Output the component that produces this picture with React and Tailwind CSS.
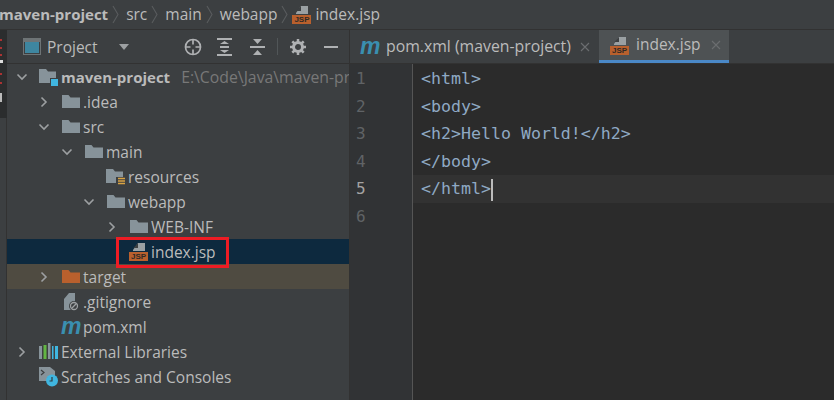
const ui = { fontFamily: '"Open Sans", "Noto Sans", sans-serif' };

function Chevron({ open }) {
  return (
    <svg width="16" height="16" viewBox="0 0 16 16" fill="none" stroke="#9da0a2" strokeWidth="1.6" className="shrink-0">
      {open ? <path d="M3.5 5.5 L8 10 L12.5 5.5" /> : <path d="M5.5 3.5 L10 8 L5.5 12.5" />}
    </svg>
  );
}

function Folder({ color = "#87939a" }) {
  return (
    <svg width="19" height="16" viewBox="0 0 19 16" className="shrink-0">
      <path d="M1 1 H7.5 L9.5 3.5 H19 V14 H1 Z" fill={color} />
    </svg>
  );
}

function ModuleFolder() {
  return (
    <svg width="19" height="18" viewBox="0 0 19 18" className="shrink-0">
      <path d="M0 1 H7 L9 3.5 H17 V15 H0 Z" fill="#87939a" />
      <rect x="11" y="10" width="8" height="8" fill="#3c3f41" />
      <rect x="12" y="11" width="7" height="7" fill="#40b6e0" />
    </svg>
  );
}

function ResFolder() {
  return (
    <svg width="19" height="18" viewBox="0 0 19 18" className="shrink-0">
      <path d="M0 1 H7 L9 3.5 H17 V15 H0 Z" fill="#87939a" />
      <rect x="10" y="9" width="9" height="9" fill="#3c3f41" />
      <path d="M12 10.5 H19 M12 13 H19 M12 15.500 H19" stroke="#d9a343" strokeWidth="1.4" />
    </svg>
  );
}

function Jsp() {
  return (
    <span className="relative block w-[19px] h-[19px] shrink-0">
      <svg width="19" height="19" viewBox="0 0 19 19" className="absolute left-0 top-0">
        <path d="M4 8 L9 1 H16 V9 H4 Z" fill="#9aa0a3" />
        <path d="M9 1 V6 H4.500 Z" fill="#3c3f41" />
      </svg>
      <span className="absolute left-0 bottom-0 w-[19px] h-[9px] bg-[#b9602d] text-[#2f2a26] text-[8px] leading-[9px] font-bold text-center" style={{ fontFamily: '"Liberation Sans", sans-serif' }}>JSP</span>
    </span>
  );
}

function Maven() {
  return (
    <span className="block w-[19px] text-[#3a8fb0] text-[23px] font-bold italic leading-none" style={{ fontFamily: '"Liberation Sans", sans-serif' }}>m</span>
  );
}

function GitIgnore() {
  return (
    <svg width="19" height="20" viewBox="0 0 19 20" className="shrink-0">
      <path d="M3 7 L8 1 H14 V12 H3 Z M3 12 H10 V18 H3 Z" fill="#87939a" />
      <circle cx="13" cy="14" r="5" fill="#3c3f41" />
      <circle cx="13" cy="14" r="3.500" fill="none" stroke="#9da0a2" strokeWidth="1.3" />
      <path d="M10.800 16.200 L15.200 11.800" stroke="#9da0a2" strokeWidth="1.3" />
    </svg>
  );
}

function Libraries() {
  return (
    <svg width="19" height="17" viewBox="0 0 19 17" className="shrink-0">
      <rect x="0" y="3" width="3" height="13" fill="#87939a" />
      <rect x="4.500" y="2" width="3" height="14" fill="#62b543" />
      <rect x="9" y="0" width="2.500" height="16" fill="#87939a" />
      <rect x="13" y="3" width="1.500" height="13" fill="#40b6e0" />
      <rect x="16" y="3" width="3" height="13" fill="#40b6e0" />
    </svg>
  );
}

function Scratches() {
  return (
    <svg width="19" height="20" viewBox="0 0 19 20" className="shrink-0">
      <path d="M0 0 H11 L16 4 V10 H0 Z M0 10 H8 V14 H0 Z" fill="#87939a" />
      <path d="M2 3 L5 5.500 L2 8" fill="none" stroke="#3c3f41" strokeWidth="1.200" />
      <circle cx="13" cy="13.500" r="6" fill="#40b6e0" />
      <path d="M13 10 V14 H10.500" fill="none" stroke="#2f3b40" strokeWidth="1.200" />
    </svg>
  );
}

function Row({ pl, chevron, icon, selected, excluded, children }) {
  const bg = selected ? "bg-[#0d293e]" : excluded ? "bg-[#4f4b41]" : "";
  return (
    <div className={`flex items-center h-[25px] whitespace-nowrap ${pl} ${bg}`}>
      <span className="w-4 h-4 shrink-0">{chevron ? <Chevron open={chevron === "open"} /> : null}</span>
      <span className="ml-[9px] w-[19px] flex justify-center items-center shrink-0">{icon}</span>
      <span className="ml-[3px] pt-[2px]">{children}</span>
    </div>
  );
}

function Crumb() {
  return (
    <svg width="7" height="19" viewBox="0 0 7 19" fill="none" stroke="#595c5e" strokeWidth="1.100" className="shrink-0 mx-[4px]">
      <path d="M1 1 L6 9.500 L1 18" />
    </svg>
  );
}

function Close() {
  return (
    <svg width="10" height="10" viewBox="0 0 10 10" stroke="#6b6e70" strokeWidth="1.100" className="shrink-0">
      <path d="M1 1 L9 9 M9 1 L1 9" />
    </svg>
  );
}

const lines = ["<html>", "<body>", "<h2>Hello World!</h2>", "</body>", "</html>", ""];

export default function App() {
  return (
    <div className="w-[834px] h-[400px] overflow-hidden bg-[#3c3f41] text-[#bbbbbb] flex flex-col text-[15.500px]" style={ui}>
      {/* breadcrumb */}
      <div className="h-[30px] shrink-0 flex items-center border-b border-[#323232] whitespace-nowrap">
        <span className="font-bold -ml-px text-[15px]">maven-project</span>
        <Crumb />
        <span className="ml-[3px]">src</span>
        <Crumb />
        <span className="ml-[3px]">main</span>
        <Crumb />
        <span className="ml-[3px]">webapp</span>
        <Crumb />
        <Jsp />
        <span className="ml-[4px]">index.jsp</span>
      </div>

      <div className="flex flex-1 min-h-0">
        {/* left tool strip */}
        <div className="w-[7px] shrink-0 bg-[#2b2d2e] h-[88px] relative overflow-hidden">
          <span className="absolute left-0 top-[9px] w-[2px] h-[2px] bg-[#a33]" />
          <span className="absolute left-0 top-[17px] w-[2px] h-[2px] bg-[#a33]" />
          <span className="absolute left-0 top-[24px] w-[2px] h-[2px] bg-[#a33]" />
          <span className="absolute left-0 top-[30px] w-[3px] h-[3px] bg-[#ddd]" />
          <span className="absolute left-0 top-[43px] w-[2px] h-[2px] bg-[#a33]" />
          <span className="absolute left-0 top-[52px] w-[2px] h-[2px] bg-[#a33]" />
          <span className="absolute left-0 top-[63px] w-[2px] h-[9px] bg-[#bbb]" />
        </div>

        {/* project pane */}
        <div className="w-[343px] shrink-0 flex flex-col border-l border-[#323232] -ml-px overflow-hidden">
          <div className="h-[34px] shrink-0 flex items-center border-b border-[#323232]">
            <svg width="18" height="17" viewBox="0 0 18 17" className="ml-[16px] shrink-0">
              <rect x="0.500" y="0.500" width="17" height="16" fill="none" stroke="#6e7476" />
              <rect x="1" y="1" width="16" height="3" fill="#6e7476" />
              <rect x="2" y="4" width="14" height="11" fill="#3e86a0" />
            </svg>
            <span className="ml-[6px] w-[52px] shrink-0 pt-[2px]">Project</span>
            <svg width="10" height="6" viewBox="0 0 10 6" className="ml-[20px] shrink-0"><path d="M0 0 H10 L5 6 Z" fill="#9da0a2" /></svg>
            <svg width="18" height="18" viewBox="0 0 18 18" fill="none" stroke="#afb1b3" strokeWidth="1.700" className="ml-[55px] shrink-0">
              <circle cx="9" cy="9" r="7.500" />
              <path d="M9 1.500 V6.500 M9 11.500 V16.500 M1.500 9 H6.500 M11.500 9 H16.500" />
            </svg>
            <svg width="15" height="18" viewBox="0 0 15 18" className="ml-[15px] shrink-0" fill="#afb1b3">
              <rect x="0" y="0" width="15" height="2" />
              <rect x="0" y="16" width="15" height="2" />
              <rect x="3" y="8" width="9" height="2" />
              <path d="M3 6 L7.500 3 L12 6 Z M3 12 L7.500 15 L12 12 Z" />
            </svg>
            <svg width="15" height="18" viewBox="0 0 15 18" className="ml-[18px] shrink-0" fill="#afb1b3">
              <rect x="0" y="8" width="15" height="2" />
              <path d="M3 1 H12 L7.500 6 Z M3 17 H12 L7.500 12 Z" />
            </svg>
            <span className="ml-[12px] w-px h-[17px] bg-[#515658] shrink-0" />
            <svg width="16" height="16" viewBox="0 0 16 16" className="ml-[12px] shrink-0">
              <circle cx="8" cy="8" r="4.500" fill="none" stroke="#afb1b3" strokeWidth="3" />
              <path d="M8 0 V3 M8 13 V16 M0 8 H3 M13 8 H16 M2.300 2.300 L4.500 4.500 M11.500 11.500 L13.700 13.700 M13.700 2.300 L11.500 4.500 M4.500 11.500 L2.300 13.700" stroke="#afb1b3" strokeWidth="2.500" />
            </svg>
            <span className="ml-[18px] w-[14px] h-[2px] bg-[#afb1b3] shrink-0" />
          </div>

          <div className="flex-1">
            <Row pl="pl-[7px]" chevron="open" icon={<ModuleFolder />}>
              <span className="font-bold text-[15px]">maven-project</span>
              <span className="ml-[7px] pl-[4px] text-[#787878] text-[15.800px]">E:\Code\Java\maven-pr</span>
            </Row>
            <Row pl="pl-[29px]" chevron="closed" icon={<Folder />}>.idea</Row>
            <Row pl="pl-[29px]" chevron="open" icon={<Folder />}>src</Row>
            <Row pl="pl-[52px]" chevron="open" icon={<Folder />}>main</Row>
            <Row pl="pl-[74px]" icon={<ResFolder />}>resources</Row>
            <Row pl="pl-[74px]" chevron="open" icon={<Folder />}>webapp</Row>
            <Row pl="pl-[97px]" chevron="closed" icon={<Folder />}>WEB-INF</Row>
            <div className="relative">
              <Row pl="pl-[97px]" selected icon={<Jsp />}>index.jsp</Row>
              <span className="absolute left-[109px] top-[-2px] w-[113px] h-[31px] border-[3px] border-[#ed1c24]" />
            </div>
            <Row pl="pl-[29px]" chevron="closed" excluded icon={<Folder color="#b9602d" />}>target</Row>
            <Row pl="pl-[29px]" icon={<GitIgnore />}>.gitignore</Row>
            <Row pl="pl-[29px]" icon={<Maven />}>pom.xml</Row>
            <Row pl="pl-[7px]" chevron="closed" icon={<Libraries />}>External Libraries</Row>
            <Row pl="pl-[7px]" icon={<Scratches />}>Scratches and Consoles</Row>
          </div>
        </div>

        {/* editor */}
        <div className="flex-1 min-w-0 flex flex-col border-l border-[#323232]">
          <div className="h-[34px] shrink-0 flex border-b border-[#323232] whitespace-nowrap">
            <div className="w-[249px] flex items-center pl-[10px] shrink-0">
              <Maven />
              <span className="ml-[7px] text-[15.800px]">pom.xml (maven-project)</span>
              <span className="ml-[9px]"><Close /></span>
            </div>
            <div className="w-[130px] flex items-center pl-[11px] bg-[#4e5254] border-b-[3px] border-[#4a88c7] shrink-0">
              <Jsp />
              <span className="ml-[7px]">index.jsp</span>
              <span className="ml-[10px]"><Close /></span>
            </div>
          </div>
          <div className="flex-1 flex bg-[#2b2b2b] min-h-0">
            <div className="w-[63px] shrink-0 bg-[#313335] border-r border-[#555555] pt-[1px] text-[#606366] text-[16px] leading-[27.500px]" style={{ fontFamily: '"DejaVu Sans Mono", monospace' }}>
              {lines.map((_, i) => (
                <div key={i} className={`pl-[6px] h-[27.500px] ${i === 4 ? "text-[#a4a3a3]" : ""}`}>{i + 1}</div>
              ))}
            </div>
            <div className="flex-1 pt-[1px] text-[#8fa9c4] text-[16.600px] leading-[27.500px] whitespace-pre" style={{ fontFamily: '"DejaVu Sans Mono", monospace' }}>
              {lines.map((l, i) => (
                <div key={i} className={`pl-[8px] h-[27.500px] ${i === 4 ? "bg-[#323232]" : ""}`}>
                  {l}
                  {i === 4 ? <span className="inline-block w-[2px] h-[22px] bg-[#bbbbbb] align-middle" /> : null}
                </div>
              ))}
            </div>
          </div>
        </div>
      </div>
    </div>
  );
}
